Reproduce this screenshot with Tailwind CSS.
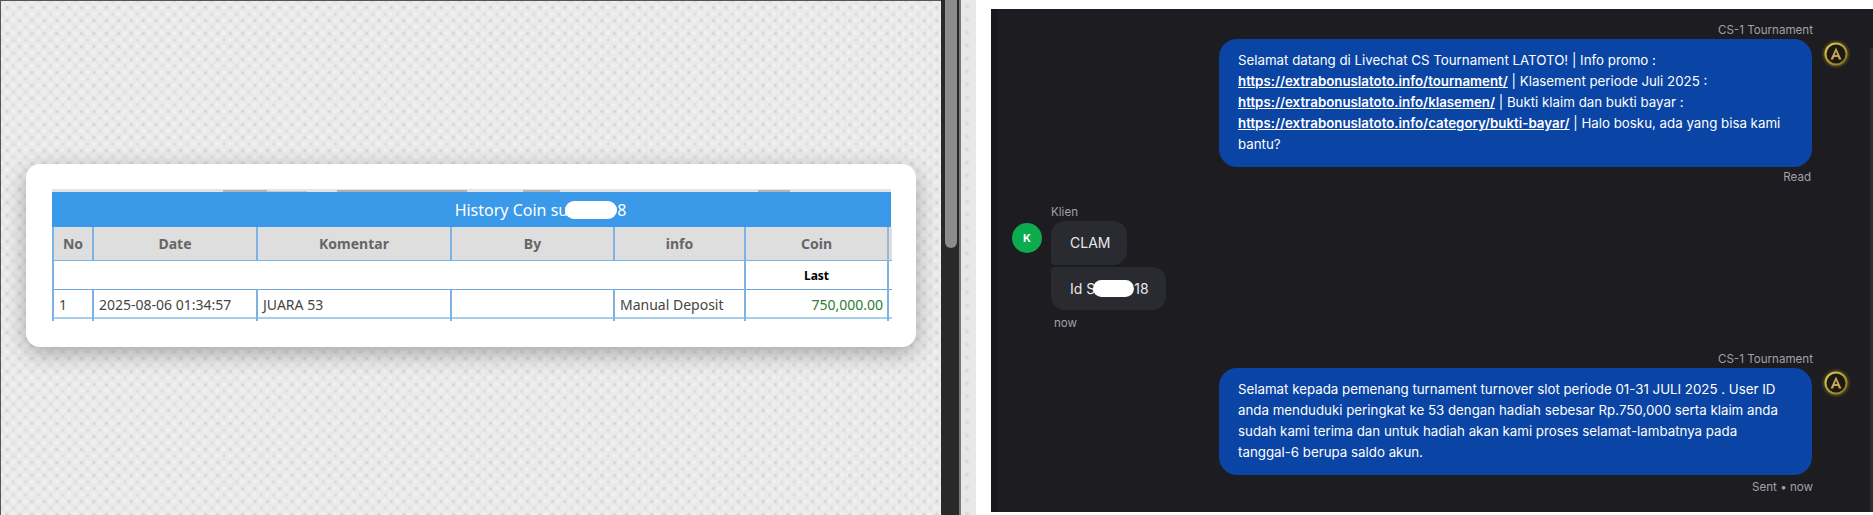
<!DOCTYPE html>
<html lang="en">
<head>
    <meta charset="UTF-8">
    <meta name="viewport" content="width=device-width, initial-scale=1.0">
    <title>History Coin</title>
    <script src="https://cdn.jsdelivr.net/npm/@tailwindcss/browser@4"></script>
</head>
<body class="bg-white">
    <div class="flex h-[515px] w-[1873px] overflow-hidden">

        <!-- left: coin history on textured page -->
        <div class="w-[941px] h-full border-l border-t border-[#555] bg-[#e8e8e8] bg-[radial-gradient(circle,#cecece_0,#dadada_1px,transparent_3px),radial-gradient(circle,#d6d6d6_0,#dedede_1px,transparent_3px),radial-gradient(circle,#f3f3f3_0,transparent_4px)] bg-size-[12.4px_13px,12.4px_13px,6.2px_6.5px] bg-position-[0_0,6.2px_6.5px,3px_3px] pl-[25px] pt-[163px]">
            <div class="w-[890px] h-[183px] bg-white rounded-[14px] shadow-[0_6px_22px_rgba(0,0,0,0.3)] pl-[26px] pt-[25px] font-['Noto_Sans',sans-serif]">
                <svg class="block w-[839px] h-[3px]" viewBox="0 0 839 3">
                    <rect width="839" height="3" fill="#e4e4e4"/>
                    <rect x="171" y="1" width="44" height="2" fill="#b4b4b4"/>
                    <rect x="215" y="2" width="40" height="1" fill="#c8c8c8"/>
                    <rect x="285" y="1" width="130" height="2" fill="#b0b0b0"/>
                    <rect x="471" y="1" width="37" height="2" fill="#b4b4b4"/>
                    <rect x="706" y="1" width="32" height="2" fill="#b4b4b4"/>
                </svg>
                <div class="w-[839px] h-[35px] bg-[#3a99e8] text-white text-[16px] pl-[138px] flex items-center justify-center">
                    History Coin su<span class="inline-block w-[52px] h-[18px] bg-white rounded-full -ml-[3px]"></span>8
                </div>
                <table class="table-fixed w-[839px] border-collapse text-[14px] text-[#444]">
                    <colgroup>
                        <col class="w-[40px]"><col class="w-[164px]"><col class="w-[194px]"><col class="w-[163px]"><col class="w-[131px]"><col class="w-[143px]"><col class="w-[4px]">
                    </colgroup>
                    <tr class="h-[33px] bg-[#dedede] font-bold text-[#666] border-b border-[#7db3e3]">
                        <th class="border-x-2 border-[#7db3e3]">No</th>
                        <th class="border-r-2 border-[#7db3e3]">Date</th>
                        <th class="border-r-2 border-[#7db3e3]">Komentar</th>
                        <th class="border-r-2 border-[#7db3e3]">By</th>
                        <th class="border-r-2 border-[#7db3e3]">info</th>
                        <th class="border-r-2 border-[#9ab8d3]">Coin</th>
                        <th></th>
                    </tr>
                    <tr class="h-[29px] border-b border-[#6fa8dc]">
                        <td colspan="5" class="border-l-2 border-r-2 border-[#7db3e3]"></td>
                        <td class="border-r-2 border-[#7db3e3] text-center text-[12px] font-bold text-black pt-[2px]">Last</td>
                        <td></td>
                    </tr>
                    <tr class="h-[29px] border-b-2 border-[#a5cdf0]">
                        <td class="border-x-2 border-[#7db3e3] pl-[5px] pt-[2px]">1</td>
                        <td class="border-r-2 border-[#7db3e3] pl-[5px] pt-[2px]">2025-08-06 01:34:57</td>
                        <td class="border-r-2 border-[#7db3e3] pl-[5px] pt-[2px]">JUARA 53</td>
                        <td class="border-r-2 border-[#7db3e3]"></td>
                        <td class="border-r-2 border-[#7db3e3] pl-[5px] pt-[2px]">Manual Deposit</td>
                        <td class="border-r-2 border-[#7db3e3] text-right pr-[4px] pt-[2px] text-[#2e7d32]">750,000.00</td>
                        <td></td>
                    </tr>
                    <tr class="h-[3px]">
                        <td class="border-x-2 border-[#7db3e3]"></td>
                        <td class="border-r-2 border-[#7db3e3]"></td>
                        <td class="border-r-2 border-[#7db3e3]"></td>
                        <td class="border-r-2 border-[#7db3e3]"></td>
                        <td class="border-r-2 border-[#7db3e3]"></td>
                        <td class="border-r-2 border-[#7db3e3]"></td>
                        <td></td>
                    </tr>
                </table>
            </div>
        </div>

        <!-- browser scrollbar -->
        <div class="w-[20px] h-full bg-[#292929] border-r-2 border-[#777] pl-[4px]">
            <div class="w-[12px] h-[248px] bg-[#8c8c8c] rounded-b-full"></div>
        </div>
        <div class="w-[15px] h-full bg-[#e8e8e8] bg-[radial-gradient(circle,#d6d6d6_0,transparent_3px)] bg-size-[12px_13px]"></div>
        <div class="w-[15px] h-full bg-white"></div>

        <!-- right: livechat -->
        <div class="relative flex-1 mt-[9px] h-[503px] bg-[#1c1c21] font-['Inter',sans-serif] text-[13.3px] leading-[21px] pt-[13px]">
            <div class="absolute left-0 top-0 bottom-0 w-[6px] bg-[#18181c]"></div>
            <div class="absolute right-0 top-[39px] bottom-0 w-[3px] bg-[#2c2c30]"></div>

            <!-- agent message -->
            <div class="ml-[228px] w-[594px] text-right text-[11.6px] leading-[16px] text-[#a1a1aa]">CS-1 Tournament</div>
            <div class="flex mt-[1px]">
                <div class="ml-[228px] w-[593px] h-[128px] rounded-[18px] bg-[#0a44a4] text-white px-[19px] py-[11px]">
                    Selamat datang di Livechat CS Tournament LATOTO! | Info promo :<br>
                    <a class="underline font-semibold">https://extrabonuslatoto.info/tournament/</a> | Klasement periode Juli 2025 :<br>
                    <a class="underline font-semibold">https://extrabonuslatoto.info/klasemen/</a> | Bukti klaim dan bukti bayar :<br>
                    <a class="underline font-semibold">https://extrabonuslatoto.info/category/bukti-bayar/</a> | Halo bosku, ada yang bisa kami<br>
                    bantu?
                </div>
                <svg class="ml-[9px] w-[30px] h-[30px]" viewBox="0 0 30 30">
                    <defs>
                        <radialGradient id="glow"><stop offset="0.6" stop-color="#6b5d18"/><stop offset="1" stop-color="#1c1c21"/></radialGradient>
                        <linearGradient id="ring" x1="0" y1="0" x2="1" y2="1"><stop offset="0" stop-color="#e3cf55"/><stop offset="1" stop-color="#7d6c20"/></linearGradient>
                    </defs>
                    <circle cx="15" cy="15" r="15" fill="url(#glow)"/>
                    <circle cx="15" cy="15" r="10.5" fill="#1b1910" stroke="url(#ring)" stroke-width="2"/>
                    <path fill-rule="evenodd" d="M15 8.5 L20.5 20.5 H17.8 L16.9 18 H13.1 L12.2 20.5 H9.5 Z M15 12.5 L13.8 16 H16.2 Z" fill="#c7a45a"/>
                </svg>
            </div>
            <div class="ml-[228px] w-[592px] text-right text-[11.6px] leading-[16px] text-[#a1a1aa] mt-[2px]">Read</div>

            <!-- client messages -->
            <div class="flex mt-[19px]">
                <div class="ml-[21px] mt-[19px] w-[30px] h-[30px] rounded-full bg-[#0bab4e] text-white text-[11px] font-bold flex items-center justify-center">K</div>
                <div class="ml-[9px]">
                    <div class="text-[11.6px] leading-[16px] text-[#a1a1aa]">Klien</div>
                    <div class="mt-[1px] w-[76px] h-[44px] bg-[#2a2a31] rounded-[14px] rounded-bl-[4px] text-[14px] text-[#e8e8ea] flex items-center pl-[19px] pb-[2px]">CLAM</div>
                    <div class="mt-[2px] w-[115px] h-[43px] bg-[#2a2a31] rounded-[14px] rounded-tl-[4px] text-[14px] text-[#e8e8ea] flex items-center pl-[19px]">Id S<span class="inline-block w-[41px] h-[17px] bg-white rounded-full -ml-[2px]"></span>18</div>
                    <div class="ml-[3px] mt-[5px] text-[11.6px] leading-[16px] text-[#a1a1aa]">now</div>
                </div>
            </div>

            <!-- agent reply -->
            <div class="ml-[228px] w-[594px] text-right text-[11.6px] leading-[16px] text-[#a1a1aa] mt-[20px]">CS-1 Tournament</div>
            <div class="flex mt-[1px]">
                <div class="ml-[228px] w-[593px] h-[107px] rounded-[18px] bg-[#0a44a4] text-white px-[19px] py-[11px]">
                    Selamat kepada pemenang turnament turnover slot periode 01-31 JULI 2025 . User ID<br>
                    anda menduduki peringkat ke 53 dengan hadiah sebesar Rp.750,000 serta klaim anda<br>
                    sudah kami terima dan untuk hadiah akan kami proses selamat-lambatnya pada<br>
                    tanggal-6 berupa saldo akun.
                </div>
                <svg class="ml-[9px] w-[30px] h-[30px]" viewBox="0 0 30 30">
                    <circle cx="15" cy="15" r="15" fill="url(#glow)"/>
                    <circle cx="15" cy="15" r="10.5" fill="#1b1910" stroke="url(#ring)" stroke-width="2"/>
                    <path fill-rule="evenodd" d="M15 8.5 L20.5 20.5 H17.8 L16.9 18 H13.1 L12.2 20.5 H9.5 Z M15 12.5 L13.8 16 H16.2 Z" fill="#c7a45a"/>
                </svg>
            </div>
            <div class="ml-[228px] w-[594px] text-right text-[11.6px] leading-[16px] text-[#a1a1aa] mt-[4px]">Sent • now</div>
        </div>
    </div>
</body>
</html>
